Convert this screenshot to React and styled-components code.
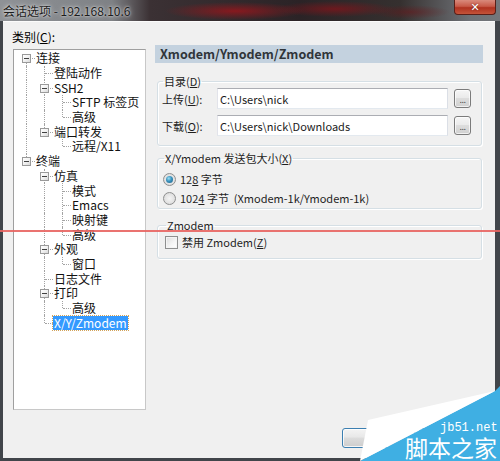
import React from 'react';
import styled, { createGlobalStyle, css } from 'styled-components';

const CJK = `"Noto Sans CJK SC", "Noto Sans", sans-serif`;

const Global = createGlobalStyle`
  html, body { margin: 0; padding: 0; background: #3b3f44; }
  body { width: 500px; height: 461px; overflow: hidden; font-family: ${CJK}; }
  * { box-sizing: border-box; }
`;

const Window = styled.div`
  position: relative;
  width: 500px;
  height: 461px;
  display: flex;
  flex-direction: column;
  background: #41454a;
  overflow: hidden;
`;

const TitleBar = styled.div`
  height: 21px;
  flex: none;
  display: flex;
  align-items: flex-start;
  background:
    radial-gradient(ellipse 70px 9px at 235px 11px, rgba(150, 22, 28, 0.85), transparent),
    radial-gradient(ellipse 60px 8px at 335px 9px, rgba(130, 20, 26, 0.75), transparent),
    radial-gradient(ellipse 40px 7px at 410px 12px, rgba(110, 20, 24, 0.5), transparent),
    linear-gradient(90deg, #8f9296 0, #7e8185 112px, #3b3134 150px, #2b2326 300px, #35302f 400px, #6e7176 470px, #74777b 500px);
`;

const TitleText = styled.div`
  margin: 3px 0 0 3px;
  font-size: 12px;
  line-height: 15px;
  color: #1c1c1c;
  text-shadow: 0 0 5px rgba(235, 235, 235, 0.9), 0 0 2px rgba(235, 235, 235, 0.9);
  white-space: nowrap;
`;

const CloseButton = styled.div`
  margin-left: auto;
  margin-right: 4px;
  width: 42px;
  height: 15px;
  border: 1px solid #5a1f18;
  border-top: none;
  border-radius: 0 0 4px 4px;
  background: linear-gradient(#d98a7c 0, #c85a48 45%, #b03220 55%, #c4543a 100%);
  display: flex;
  align-items: center;
  justify-content: center;
  color: #fff;
  font-family: "DejaVu Sans", sans-serif;
  font-weight: bold;
  font-size: 11px;
  line-height: 1;
  text-shadow: 0 0 2px #6a1a10;
`;

const Content = styled.div`
  flex: 1;
  margin: 0 5px 3px 3px;
  background: #f0f0f0;
  border-top: 1px solid #fbfbfb;
  display: flex;
  flex-direction: column;
  padding: 7px 0 0 9px;
`;

const Main = styled.div`
  display: flex;
  align-items: flex-start;
`;

const LeftColumn = styled.div`
  width: 134px;
  display: flex;
  flex-direction: column;
`;

const CategoryLabel = styled.div`
  font-size: 12px;
  line-height: 15px;
  color: #000;
  margin-bottom: 5px;
`;

const TreeBox = styled.div`
  margin-left: 1px;
  width: 133px;
  height: 361px;
  background: #fff;
  border: 1px solid #a9a9a9;
  border-color: #9f9f9f #c8c8c8 #c8c8c8 #9f9f9f;
  padding: 1px 0 0 3px;
`;

const TreeRow = styled.div`
  display: flex;
  height: 14.7px;
  white-space: nowrap;
`;

const Guide = styled.span`
  position: relative;
  flex: none;
  width: 18px;
  ${(p) =>
    p.$line &&
    css`
      &::before {
        content: '';
        position: absolute;
        left: 9px;
        top: 0;
        bottom: 0;
        border-left: 1px dotted #a3a3a3;
      }
    `}
`;

const Connector = styled.span`
  position: relative;
  flex: none;
  width: 18px;
  &::before {
    content: '';
    position: absolute;
    left: 9px;
    top: ${(p) => (p.$first ? '50%' : '0')};
    bottom: ${(p) => (p.$last ? '50%' : '0')};
    border-left: 1px dotted #a3a3a3;
  }
  &::after {
    content: '';
    position: absolute;
    left: 10px;
    right: 0;
    top: 50%;
    border-top: 1px dotted #a3a3a3;
  }
`;

const Expander = styled.span`
  position: absolute;
  z-index: 1;
  left: 5px;
  top: calc(50% - 4px);
  width: 9px;
  height: 9px;
  border: 1px solid #9a9a9a;
  background: linear-gradient(135deg, #ffffff 0, #f2f2f2 50%, #d9d9d9 100%);
  &::after {
    content: '';
    position: absolute;
    left: 1px;
    right: 1px;
    top: 3px;
    height: 1px;
    background: #404040;
  }
`;

const NodeLabel = styled.span`
  font-size: 12px;
  line-height: 14px;
  height: 14px;
  align-self: center;
  padding: 0 1px;
  color: #111;
  ${(p) =>
    p.$selected &&
    css`
      background: #3399ff;
      color: #fff;
      outline: 1px dotted #d2a35a;
    `}
`;

const RightColumn = styled.div`
  margin: 16px 0 0 9px;
  width: 328px;
  display: flex;
  flex-direction: column;
`;

const Header = styled.div`
  height: 18px;
  background: #c4d2df;
  padding-left: 5px;
  font-size: 12.5px;
  font-weight: bold;
  line-height: 18px;
  color: #30353a;
`;

const Group = styled.fieldset`
  margin: ${(p) => p.$top}px 1px 0 2px;
  padding: ${(p) => p.$pad};
  border: 1px solid #d5dfe5;
  border-radius: 3px;
  box-shadow: inset 1px 1px 0 #fff, 1px 1px 0 #fff;
  min-width: 0;
  display: flex;
  flex-direction: column;
  gap: ${(p) => p.$gap}px;
`;

const Legend = styled.legend`
  padding: 0 1px;
  margin-left: 1px;
  font-size: 11px;
  line-height: 14px;
  color: #1e1e1e;
`;

const FieldRow = styled.div`
  display: flex;
  align-items: center;
  height: 21px;
`;

const FieldLabel = styled.span`
  width: 55px;
  flex: none;
  font-size: 11px;
  color: #1e1e1e;
`;

const PathInput = styled.input`
  width: 231px;
  height: 21px;
  flex: none;
  border: 1px solid;
  border-color: #abadb3 #dbdfe6 #e3e9ef #e2e3ea;
  background: #fff;
  padding: 0 2px;
  font-family: ${CJK};
  font-size: 11px;
  color: #1a1a1a;
  outline: none;
`;

const BrowseButton = styled.button`
  margin-left: 6px;
  width: 17px;
  height: 19px;
  padding: 4px 0 0;
  border: 1px solid #7b7b7b;
  border-radius: 3px;
  background: linear-gradient(#f6f6f6 0, #ebebeb 45%, #dddddd 50%, #d0d0d0 100%);
  box-shadow: inset 0 0 0 1px rgba(255, 255, 255, 0.7);
  font-family: "DejaVu Sans", sans-serif;
  font-size: 8px;
  letter-spacing: -0.5px;
  color: #333;
  line-height: 1;
`;

const OptionRow = styled.label`
  display: flex;
  align-items: center;
  gap: 4px;
  height: 16px;
  font-size: 11px;
  color: #1e1e1e;
  white-space: pre;
`;

const Radio = styled.span`
  flex: none;
  width: 13px;
  height: 13px;
  border-radius: 50%;
  border: 1px solid #8e8f8f;
  background: radial-gradient(circle at 50% 50%, #f4f4f4 0, #e2e2e2 60%, #cfcfcf 100%);
  display: flex;
  align-items: center;
  justify-content: center;
  &::after {
    content: '';
    display: ${(p) => (p.$checked ? 'block' : 'none')};
    width: 7px;
    height: 7px;
    border-radius: 50%;
    background: radial-gradient(circle at 40% 35%, #9be0f5 0, #3a92bd 45%, #1a5d86 100%);
  }
`;

const CheckBox = styled.span`
  flex: none;
  width: 13px;
  height: 13px;
  border: 1px solid #8e8f8f;
  background: linear-gradient(135deg, #dcdcdc 0, #f5f5f5 60%, #fff 100%);
  box-shadow: inset 0 0 0 1px #f4f4f4;
`;

const Footer = styled.div`
  margin-top: 18px;
  display: flex;
  justify-content: flex-end;
  gap: 4px;
  padding-right: 3px;
`;

const DialogButton = styled.button`
  width: 73px;
  height: 20px;
  border: 1px solid #3c7fb1;
  border-radius: 3px;
  background: linear-gradient(#f4f4f4 0, #e8e8e8 45%, #dcdcdc 50%, #cdcdcd 100%);
  box-shadow: inset 0 0 0 1px rgba(255, 255, 255, 0.8);
  font-family: ${CJK};
  font-size: 11px;
  color: #000;
  padding: 0;
`;

const RedRule = styled.div`
  position: absolute;
  left: 0;
  top: 230px;
  width: 500px;
  height: 2px;
  background: rgba(232, 100, 96, 0.9);
  pointer-events: none;
`;

const Watermark = styled.div`
  position: absolute;
  right: 0;
  bottom: 0;
  width: 140px;
  height: 75px;
  pointer-events: none;
`;

const WatermarkShape = styled.svg`
  display: block;
  width: 140px;
  height: 75px;
`;

const WatermarkSite = styled.span`
  position: absolute;
  left: 80px;
  top: 36px;
  font-family: "Liberation Mono", monospace;
  font-size: 12px;
  line-height: 12px;
  color: #fff;
`;

const WatermarkName = styled.span`
  position: absolute;
  left: 45px;
  top: 50px;
  font-family: ${CJK};
  font-size: 23px;
  line-height: 23px;
  color: #fff;
  white-space: nowrap;
`;

const tree = [
  { label: '连接', guides: [], exp: true, first: true },
  { label: '登陆动作', guides: [true] },
  { label: 'SSH2', guides: [true], exp: true },
  { label: 'SFTP 标签页', guides: [true, true] },
  { label: '高级', guides: [true, true], last: true },
  { label: '端口转发', guides: [true], exp: true, last: true },
  { label: '远程/X11', guides: [true, false], last: true },
  { label: '终端', guides: [], exp: true, last: true },
  { label: '仿真', guides: [false], exp: true },
  { label: '模式', guides: [false, true] },
  { label: 'Emacs', guides: [false, true] },
  { label: '映射键', guides: [false, true] },
  { label: '高级', guides: [false, true], last: true },
  { label: '外观', guides: [false], exp: true },
  { label: '窗口', guides: [false, true], last: true },
  { label: '日志文件', guides: [false] },
  { label: '打印', guides: [false], exp: true },
  { label: '高级', guides: [false, true], last: true },
  { label: 'X/Y/Zmodem', guides: [false], last: true, selected: true },
];

function Tree() {
  return (
    <TreeBox>
      {tree.map((node, i) => (
        <TreeRow key={i}>
          {node.guides.map((g, j) => (
            <Guide key={j} $line={g} />
          ))}
          <Connector $first={node.first} $last={node.last}>
            {node.exp && <Expander />}
          </Connector>
          <NodeLabel $selected={node.selected}>{node.label}</NodeLabel>
        </TreeRow>
      ))}
    </TreeBox>
  );
}

export default function App() {
  return (
    <Window>
      <Global />
      <TitleBar>
        <TitleText>会话选项 - 192.168.10.6</TitleText>
        <CloseButton>✕</CloseButton>
      </TitleBar>
      <Content>
        <Main>
          <LeftColumn>
            <CategoryLabel>
              类别(<u>C</u>):
            </CategoryLabel>
            <Tree />
          </LeftColumn>
          <RightColumn>
            <Header>Xmodem/Ymodem/Zmodem</Header>
            <Group $top={11} $pad="0 10px 9px 4px" $gap={6}>
              <Legend>
                目录(<u>D</u>)
              </Legend>
              <FieldRow>
                <FieldLabel>
                  上传(<u>U</u>):
                </FieldLabel>
                <PathInput readOnly value="C:\Users\nick" />
                <BrowseButton>...</BrowseButton>
              </FieldRow>
              <FieldRow>
                <FieldLabel>
                  下载(<u>O</u>):
                </FieldLabel>
                <PathInput readOnly value="C:\Users\nick\Downloads" />
                <BrowseButton>...</BrowseButton>
              </FieldRow>
            </Group>
            <Group $top={5} $pad="6px 10px 2px 5px" $gap={3}>
              <Legend>
                X/Ymodem 发送包大小(<u>X</u>)
              </Legend>
              <OptionRow>
                <Radio $checked />
                <span>
                  12<u>8</u> 字节
                </span>
              </OptionRow>
              <OptionRow>
                <Radio />
                <span>
                  102<u>4</u> 字节  (Xmodem-1k/Ymodem-1k)
                </span>
              </OptionRow>
            </Group>
            <Group $top={9} $pad="2px 10px 8px 7px" $gap={0}>
              <Legend>Zmodem</Legend>
              <OptionRow>
                <CheckBox />
                <span>
                  禁用 Zmodem(<u>Z</u>)
                </span>
              </OptionRow>
            </Group>
          </RightColumn>
        </Main>
        <Footer>
          <DialogButton>确定</DialogButton>
          <DialogButton>取消</DialogButton>
        </Footer>
      </Content>
      <RedRule />
      <Watermark>
        <WatermarkShape viewBox="0 0 140 75">
          <polygon points="140,0 140,75 0,75 135,5" fill="#3fafe3" />
          <polygon points="8,34 135,5 0,75" fill="#ffffff" />
        </WatermarkShape>
        <WatermarkSite>jb51.net</WatermarkSite>
        <WatermarkName>脚本之家</WatermarkName>
      </Watermark>
    </Window>
  );
}
